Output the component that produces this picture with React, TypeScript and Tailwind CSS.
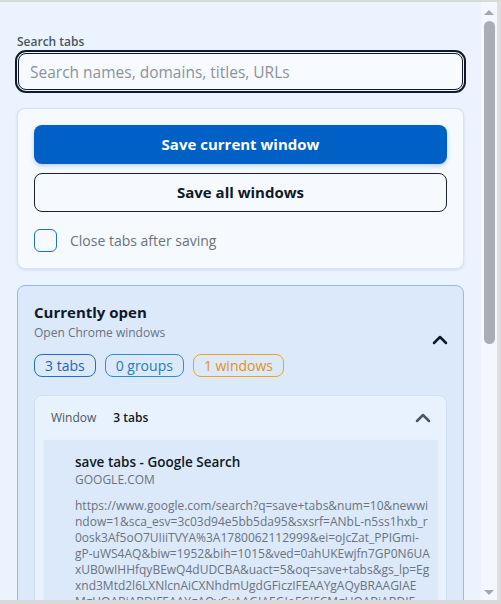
import { ChevronUp } from 'lucide-react'

const urlLines = [
  'https://www.google.com/search?q=save+tabs&num=10&newwi',
  'ndow=1&sca_esv=3c03d94e5bb5da95&sxsrf=ANbL-n5ss1hxb_r',
  '0osk3Af5oO7UIiiTVYA%3A1780062112999&ei=oJcZat_PPIGmi-',
  'gP-uWS4AQ&biw=1952&bih=1015&ved=0ahUKEwjfn7GP0N6UA',
  'xUB0wIHHfqyBEwQ4dUDCBA&uact=5&oq=save+tabs&gs_lp=Eg',
  'xnd3Mtd2l6LXNlcnAiCXNhdmUgdGFiczIFEAAYgAQyBRAAGIAE',
  'MgUQABiABDIFEAAYgAQyCxAAGIAEGIoFGJECMgUQABiABDIF',
]

function Badge({ label, tone }: { label: string; tone: 'blue' | 'cyan' | 'amber' }) {
  const styles = {
    blue: 'border-[#1f6fd0] text-[#1f63b8]',
    cyan: 'border-[#2b8fd6] text-[#1f7cc0]',
    amber: 'border-[#f2a21a] text-[#e39310]',
  }
  return (
    <span className={`h-[23px] px-[10px] flex items-center rounded-lg border text-[14px] leading-none ${styles[tone]}`}>
      {label}
    </span>
  )
}

export default function App() {
  return (
    <div className="w-[501px] h-[604px] flex flex-col bg-[#eaf3fe] overflow-hidden" style={{ fontFamily: '"Open Sans", "Noto Sans", sans-serif' }}>
      <div className="h-[2px] bg-[#d3ddd2] shrink-0" />
      <div className="flex flex-1 min-h-0">
        <div className="w-[481px] shrink-0 overflow-hidden px-[17px] pt-[32px]">
          <label className="block text-[12px] leading-4 font-semibold text-[#4b5563] mb-[3px]">Search tabs</label>
          <div className="mx-px">
            <input
              className="w-full h-[37px] rounded-lg border border-[#0f1b2d] outline-2 outline-offset-1 outline-[#0f1b2d] bg-[#f7fbff] px-[11px] text-[15.5px] text-[#111827] placeholder:text-[#8b929b]"
              placeholder="Search names, domains, titles, URLs"
            />
          </div>

          <div className="mt-[18px] bg-[#f6faff] border border-[#d6e4f6] rounded-lg shadow-[0_1px_3px_rgba(30,60,110,0.12)] p-4">
            <button className="w-full h-[39px] rounded-lg bg-[#0060c6] text-white text-[15px] font-bold shadow-[0_2px_4px_rgba(0,80,180,0.25)]">
              Save current window
            </button>
            <button className="w-full h-[39px] mt-[9px] rounded-lg border border-[#1a2233] bg-transparent text-[#111827] text-[15px] font-bold">
              Save all windows
            </button>
            <div className="mt-[17px] flex items-center gap-[13px]">
              <span className="w-[23px] h-[23px] rounded-[6px] border-[1.5px] border-[#1f6fd0] bg-[#f6faff]" />
              <span className="text-[14px] text-[#6b7280]">Close tabs after saving</span>
            </div>
          </div>

          <div className="mt-[16px] bg-[#dbe9fb] border border-[#8fbaf0] rounded-lg px-4 pt-4">
            <div className="flex items-center">
              <div className="flex-1">
                <h2 className="text-[15px] leading-5 font-bold text-[#111827]">Currently open</h2>
                <p className="mt-[3px] text-[12px] leading-4 text-[#6b7280]">Open Chrome windows</p>
                <div className="mt-[13px] flex gap-[9px]">
                  <Badge label="3 tabs" tone="blue" />
                  <Badge label="0 groups" tone="cyan" />
                  <Badge label="1 windows" tone="amber" />
                </div>
              </div>
              <ChevronUp size={24} strokeWidth={2.5} className="text-[#111827] -mr-[5px]" />
            </div>

            <div className="mt-[18px] bg-[#e8f2fe] border border-[#cfe0f6] rounded-lg px-2">
              <div className="h-[43px] flex items-center pl-2 pr-[3px]">
                <span className="text-[12px] text-[#4b5563]">Window</span>
                <span className="ml-[17px] text-[12px] font-semibold text-[#111827]">3 tabs</span>
                <ChevronUp size={24} strokeWidth={2.5} className="ml-auto text-[#4b5563]" />
              </div>
              <div className="bg-[#dce9fa] border-l border-t border-[#e6f0fd] pl-[31px] pt-3 pb-4">
                <div className="text-[13.5px] leading-5 font-semibold text-[#111827]">save tabs - Google Search</div>
                <div className="text-[12px] leading-4 text-[#6b7280]">GOOGLE.COM</div>
                <div className="mt-[10px] text-[12px] leading-4 text-[#6b7280]">
                  {urlLines.map((l) => (
                    <div key={l} className="whitespace-nowrap">{l}</div>
                  ))}
                </div>
              </div>
            </div>
          </div>
        </div>

        <div className="w-[16px] shrink-0 bg-[#f3f8fe] flex flex-col items-center">
          <div className="mt-[8px] w-0 h-0 border-l-[5px] border-r-[5px] border-b-[5px] border-l-transparent border-r-transparent border-b-[#a4a8b0]" />
          <div className="mt-[6px] w-[11px] h-[323px] rounded-full bg-[#a9adb5]" />
          <div className="mt-auto mb-[5px] w-0 h-0 border-l-[5px] border-r-[5px] border-t-[5px] border-l-transparent border-r-transparent border-t-[#a4a8b0]" />
        </div>
        <div className="w-[4px] shrink-0 bg-[#dedede]" />
      </div>
      <div className="h-[4px] shrink-0 bg-[#d9d9d9]" />
    </div>
  )
}
